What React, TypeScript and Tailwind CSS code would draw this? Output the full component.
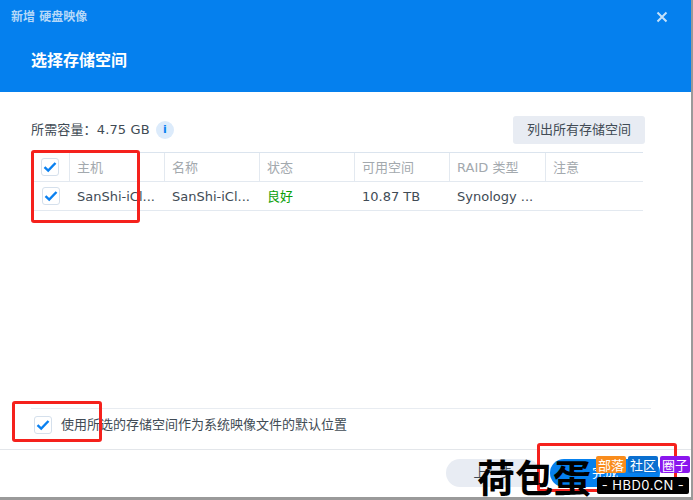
const columns = [
  { label: "主机", value: "SanShi-iCl...", width: "w-[95px]" },
  { label: "名称", value: "SanShi-iCl...", width: "w-[95px]" },
  { label: "状态", value: "良好", width: "w-[95px]", green: true },
  { label: "可用空间", value: "10.87 TB", width: "w-[95px]" },
  { label: "RAID 类型", value: "Synology ...", width: "w-[96px]" },
  { label: "注意", value: "", width: "w-[81px]" },
];

function Check() {
  return (
    <span className="flex h-[18px] w-[18px] items-center justify-center rounded-[3px] border border-[#d5e0ec] bg-white">
      <svg width="14" height="12" viewBox="0 0 14 12" fill="none">
        <path d="M1.5 6.2 L5.2 9.6 L12.5 2" stroke="#0a80f0" strokeWidth="2.4" />
      </svg>
    </span>
  );
}

function RedBox({ className }: { className: string }) {
  return <div className={`pointer-events-none absolute rounded-[3px] border-[3px] border-[#f5211c] ${className}`} />;
}

export default function App() {
  return (
    <div className="relative h-[500px] w-[693px] overflow-hidden bg-[#9a9a9a] font-['DejaVu_Sans','Noto_Sans_CJK_SC',sans-serif] text-[13px] text-[#414b55]">
      <div className="flex h-[497px] w-[691px] flex-col bg-white">
        <header className="h-[92px] bg-[#0580ee] text-white">
          <div className="flex h-[34px] items-center justify-between pl-[11px] pr-[23px]">
            <span className="text-[12px] font-bold text-[#b5d8f8]">新增 硬盘映像</span>
            <svg width="12" height="12" viewBox="0 0 12 12" fill="none">
              <path d="M1.5 1.5 L10.5 10.5 M10.5 1.5 L1.5 10.5" stroke="#c5e1fa" strokeWidth="2" />
            </svg>
          </div>
          <h1 className="pl-[31px] pt-[10px] text-[16px] font-bold leading-[34px]">选择存储空间</h1>
        </header>

        <main className="flex flex-1 flex-col px-[31px]">
          <div className="mt-6 flex h-7 w-[614px] items-center justify-between">
            <div className="flex items-center">
              <span className="tracking-[0.15px]">所需容量：4.75 GB</span>
              <span className="ml-[6px] flex h-[18px] w-[18px] items-center justify-center rounded-full bg-[#dcebfb] text-[11px] font-bold text-[#0a80f0]">
                i
              </span>
            </div>
            <button className="h-7 w-[132px] rounded-[3px] bg-[#e8ecf3] text-center text-[13px] text-[#414b55]">
              列出所有存储空间
            </button>
          </div>

          <div className="mt-2 w-[612px] border-t border-[#dbe4ee]">
            <div className="flex h-[29px] items-center border-b border-[#e3e9f0] text-[#a3a9ae]">
              <div className="flex w-[39px] items-center justify-center self-stretch border-r border-[#e3e9f0]">
                <Check />
              </div>
              {columns.map((col) => (
                <div
                  key={col.label}
                  className={`${col.width} flex items-center self-stretch border-r border-[#e3e9f0] pl-[7px] pt-[1px] last:border-r-0`}
                >
                  {col.label}
                </div>
              ))}
            </div>
            <div className="flex h-[29px] items-center border-b border-[#e3e9f0]">
              <div className="flex w-[39px] items-center justify-center">
                <Check />
              </div>
              {columns.map((col) => (
                <div
                  key={col.label}
                  className={`${col.width} whitespace-nowrap pl-[7px] pt-[1px] ${col.green ? "text-[#0aa00a]" : ""}`}
                >
                  {col.value}
                </div>
              ))}
            </div>
          </div>

          <div className="mt-auto flex h-[41px] w-[620px] items-center border-t border-[#e8ecf1] pb-2 pl-[3px]">
            <Check />
            <span className="ml-[9px]">使用所选的存储空间作为系统映像文件的默认位置</span>
          </div>
        </main>

        <footer className="flex h-[48px] items-start justify-end gap-[10px] border-t border-[#e3e6ea] pr-[31px] pt-[9px]">
          <button className="h-[28px] w-[94px] rounded-full bg-[#e8ecf3] text-[#414b55]">上一步</button>
          <button className="h-[28px] w-[110px] rounded-full bg-[#0580ee] text-white">完成</button>
        </footer>
      </div>

      <RedBox className="left-[31px] top-[150px] h-[73px] w-[109px]" />
      <RedBox className="left-[12px] top-[401px] h-[41px] w-[90px]" />
      <RedBox className="left-[537px] top-[443px] h-[49px] w-[140px]" />

      <div className="absolute left-[477px] top-[453px] font-['Noto_Sans_CJK_SC',sans-serif] text-[38px] leading-[46px] font-bold text-black">
        荷包蛋
      </div>
      <div className="absolute left-[596px] top-[456px] flex gap-[2px] font-['Noto_Sans_CJK_SC',sans-serif] text-[13px] leading-[17px] text-white">
        <span className="w-[30px] rounded-[2px] bg-[#f98c1c] text-center">部落</span>
        <span className="w-[30px] rounded-[2px] bg-[#0a6fd0] text-center">社区</span>
        <span className="w-[30px] rounded-[2px] bg-[#8a16ee] text-center">圈子</span>
      </div>
      <div className="absolute left-[597px] top-[477px] h-[17px] w-[92px] rounded-[2px] bg-black text-center font-['Inter',sans-serif] text-[13px] leading-[17px] tracking-[0.5px] text-white">
        - HBD0.CN -
      </div>
    </div>
  );
}
